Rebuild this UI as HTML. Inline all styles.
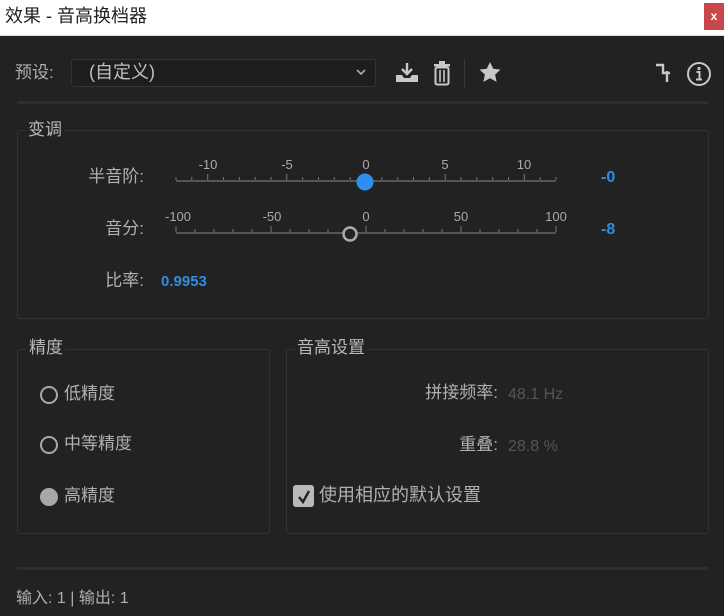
<!DOCTYPE html><html><head><meta charset="utf-8"><style>
*{margin:0;padding:0;box-sizing:border-box}
body{width:724px;height:616px;background:#222;font-family:"Liberation Sans","Noto Sans CJK SC",sans-serif;color:#b0b0b0;position:relative;overflow:hidden;font-size:17px}
.a{position:absolute;white-space:nowrap;line-height:1.2}
.box{position:absolute;border:1px solid #333;border-radius:3px}
.lbl{position:absolute;background:#222;padding:0 2px;color:#b8b8b8;font-size:17px;line-height:1.2}
.blue{color:#2f8de4}
.sep{position:absolute;left:17px;width:691px;height:3px;background:#2e2e2e}
.radio{position:absolute;width:18px;height:18px;border:2.5px solid #a8a8a8;border-radius:50%}
</style></head><body>
<div class="a" style="left:0;top:0;width:724px;height:36px;background:#fff;border-bottom:1px solid #ddd"></div>
<div class="a" style="left:5px;top:6px;color:#222;font-size:18px">效果 - 音高换档器</div>
<div class="a" style="left:704px;top:3px;width:20px;height:27px;background:#c9474b;color:#fff;font-size:12px;font-weight:bold;text-align:center;line-height:27px">x</div>
<div class="a" style="left:15px;top:63px">预设:</div>
<div class="a" style="left:71px;top:59px;width:305px;height:28px;border:1px solid #333;border-radius:3px;background:#1e1e1e"></div>
<div class="a" style="left:89px;top:62px;color:#c0c0c0;font-size:18px">(自定义)</div>
<svg class="a" style="left:355px;top:68px" width="12" height="8"><path d="M2 2l4 4 4-4" stroke="#aaa" stroke-width="1.6" fill="none"/></svg>
<svg class="a" style="left:394px;top:60px" width="26" height="26"><path d="M13 3v10M8 9l5 5 5-5" stroke="#c8c8c8" stroke-width="2.4" fill="none"/><path d="M2 15h6l2 3h6l2-3h6v7H2z" fill="#c8c8c8"/></svg>
<svg class="a" style="left:432px;top:60px" width="20" height="26"><rect x="2" y="4" width="16" height="2.5" fill="#c8c8c8"/><rect x="7" y="1" width="6" height="3" fill="#c8c8c8"/><rect x="3.5" y="7.5" width="13" height="17" rx="1.5" stroke="#c8c8c8" stroke-width="2" fill="none"/><path d="M8 10v12M12 10v12" stroke="#c8c8c8" stroke-width="1.6"/></svg>
<div class="a" style="left:464px;top:59px;width:1px;height:28px;background:#3a3a3a"></div>
<svg class="a" style="left:478px;top:61px" width="24" height="22"><path d="M12 1l3.2 6.8 7.3.8-5.4 5 1.5 7.3L12 17.2 5.4 20.9l1.5-7.3-5.4-5 7.3-.8z" fill="#c8c8c8"/></svg>
<svg class="a" style="left:655px;top:63px" width="18" height="20"><path d="M1 2h7v8h7M12 8v11" stroke="#c8c8c8" stroke-width="2.4" fill="none"/></svg>
<svg class="a" style="left:686px;top:61px" width="26" height="26"><circle cx="13" cy="13" r="11" stroke="#c8c8c8" stroke-width="2" fill="none"/><circle cx="13" cy="7.5" r="1.6" fill="#c8c8c8"/><path d="M10.5 11h3v7M10 18.5h6" stroke="#c8c8c8" stroke-width="2" fill="none"/></svg>
<div class="sep" style="top:101px"></div>
<div class="box" style="left:17px;top:130px;width:692px;height:189px"></div>
<div class="lbl" style="left:26px;top:120px">变调</div>
<div class="a" style="right:580px;top:167px">半音阶:</div>
<div class="a" style="right:580px;top:219px">音分:</div>
<div class="a" style="right:580px;top:271px">比率:</div>
<div class="a blue" style="left:161px;top:273px;font-size:15px;font-weight:bold">0.9953</div>
<div class="a blue" style="left:601px;top:168px;font-weight:bold;font-size:16px">-0</div>
<div class="a blue" style="left:601px;top:220px;font-weight:bold;font-size:16px">-8</div>
<svg class="a" style="left:160px;top:150px" width="420" height="100" font-family="Liberation Sans" font-size="13" fill="#aaa" text-anchor="middle">
<text x="48" y="19">-10</text><text x="127" y="19">-5</text><text x="206" y="19">0</text><text x="285" y="19">5</text><text x="364" y="19">10</text>
<rect x="16" y="30" width="380" height="2" fill="#555"/>
<g stroke="#777" stroke-width="1">
<path d="M16 27v3M31.8 27v3M47.7 24v6M63.5 27v3M79.3 27v3M95.2 27v3M111 27v3M126.8 24v6M142.7 27v3M158.5 27v3M174.3 27v3M190.2 27v3M206 24v6M221.8 27v3M237.7 27v3M253.5 27v3M269.3 27v3M285.2 24v6M301 27v3M316.8 27v3M332.7 27v3M348.5 27v3M364.3 24v6M380.2 27v3M396 27v3"/>
</g>
<circle cx="205" cy="32" r="8.5" fill="#2e8ff0"/>
<text x="18" y="71">-100</text><text x="112" y="71">-50</text><text x="206" y="71">0</text><text x="301" y="71">50</text><text x="396" y="71">100</text>
<rect x="16" y="82" width="380" height="2" fill="#555"/>
<path stroke="#777" d="M16 76v6M35 79v3M54 79v3M73 79v3M92 79v3M111 76v6M130 79v3M149 79v3M168 79v3M187 79v3M206 76v6M225 79v3M244 79v3M263 79v3M282 79v3M301 76v6M320 79v3M339 79v3M358 79v3M377 79v3M396 76v6"/>
<circle cx="190" cy="84" r="6.5" fill="#222" stroke="#aaa" stroke-width="2.5"/>
</svg>
<div class="box" style="left:17px;top:349px;width:253px;height:185px"></div>
<div class="lbl" style="left:27px;top:338px">精度</div>
<div class="radio" style="left:40px;top:386px"></div><div class="a" style="left:64px;top:384px">低精度</div>
<div class="radio" style="left:40px;top:436px"></div><div class="a" style="left:64px;top:434px">中等精度</div>
<div class="radio" style="left:40px;top:488px;background:#a8a8a8"></div><div class="a" style="left:64px;top:486px">高精度</div>
<div class="box" style="left:286px;top:349px;width:423px;height:185px"></div>
<div class="lbl" style="left:295px;top:338px">音高设置</div>
<div class="a" style="right:226px;top:383px">拼接频率:</div>
<div class="a" style="left:508px;top:385px;color:#555;font-size:16px">48.1 Hz</div>
<div class="a" style="right:226px;top:435px">重叠:</div>
<div class="a" style="left:508px;top:437px;color:#555;font-size:16px">28.8 %</div>
<div class="a" style="left:293px;top:485px;width:21px;height:22px;background:#b8b8b8;border-radius:3px"></div>
<svg class="a" style="left:294px;top:487px" width="20" height="20"><path d="M5 10l4 5 6-11" stroke="#222" stroke-width="2.4" fill="none"/></svg>
<div class="a" style="left:319px;top:485px;font-size:18px">使用相应的默认设置</div>
<div class="sep" style="top:567px"></div>
<div class="a" style="left:16px;top:589px;font-size:16px">输入: 1 | 输出: 1</div>
</body></html>
